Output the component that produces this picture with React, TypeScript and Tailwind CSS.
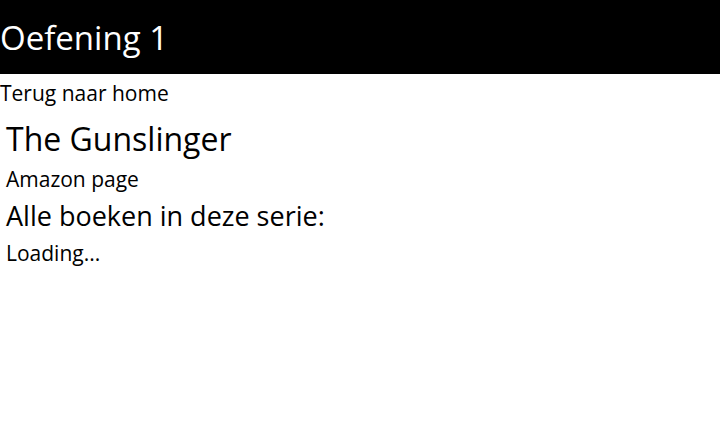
export default function App() {
  return (
    <div className="min-h-[437px] bg-white text-black" style={{ fontFamily: '"Open Sans", sans-serif' }}>
      <header className="h-[74px] bg-black flex items-center">
        <h1 className="text-[33px] text-white leading-none">Oefening 1</h1>
      </header>
      <div className="text-[21px] leading-[38px] h-[38px]">Terug naar home</div>
      <div className="px-[6px]">
        <h2 className="text-[32px] leading-[54px]">The Gunslinger</h2>
        <p className="text-[21px] leading-[26px]">Amazon page</p>
        <h3 className="text-[27px] leading-[48px]">Alle boeken in deze serie:</h3>
        <p className="text-[21px] leading-[26px]">Loading...</p>
      </div>
    </div>
  )
}
